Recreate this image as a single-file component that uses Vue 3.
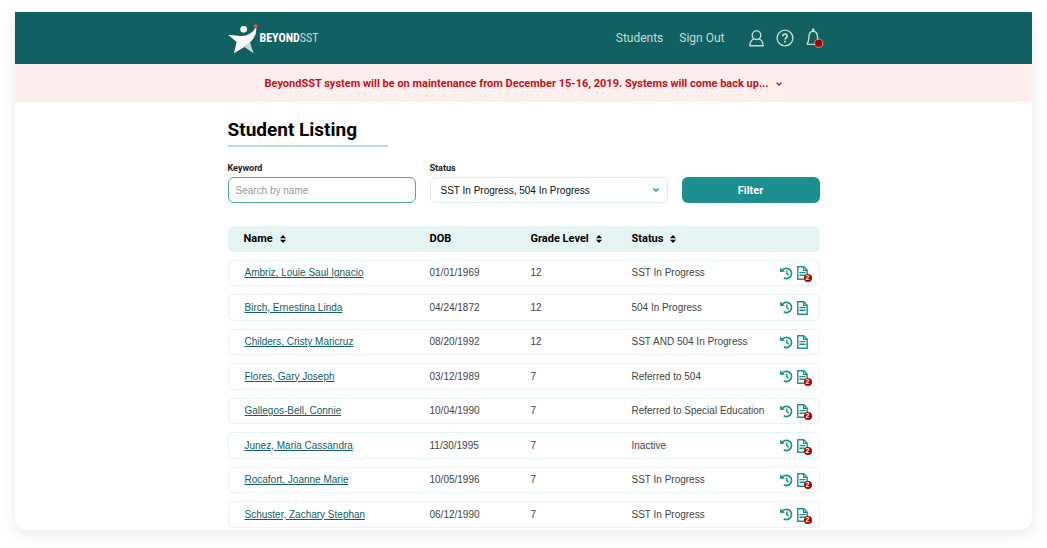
<script setup>
import { ref } from 'vue'

const keyword = ref('')
const status = ref('SST In Progress, 504 In Progress')
const statuses = ['SST In Progress, 504 In Progress', 'Referred to 504', 'Referred to Special Education', 'Inactive']

const columns = [
  { label: 'Name', key: 'name', sortable: true },
  { label: 'DOB', key: 'dob', sortable: false },
  { label: 'Grade Level', key: 'grade', sortable: true },
  { label: 'Status', key: 'status', sortable: true },
]

const students = [
  { name: 'Ambriz, Louie Saul Ignacio', dob: '01/01/1969', grade: 12, status: 'SST In Progress', notes: 2 },
  { name: 'Birch, Ernestina Linda', dob: '04/24/1872', grade: 12, status: '504 In Progress', notes: 0 },
  { name: 'Childers, Cristy Maricruz', dob: '08/20/1992', grade: 12, status: 'SST AND 504 In Progress', notes: 0 },
  { name: 'Flores, Gary Joseph', dob: '03/12/1989', grade: 7, status: 'Referred to 504', notes: 2 },
  { name: 'Gallegos-Bell, Connie', dob: '10/04/1990', grade: 7, status: 'Referred to Special Education', notes: 2 },
  { name: 'Junez, Maria Cassandra', dob: '11/30/1995', grade: 7, status: 'Inactive', notes: 2 },
  { name: 'Rocafort, Joanne Marie', dob: '10/05/1996', grade: 7, status: 'SST In Progress', notes: 2 },
  { name: 'Schuster, Zachary Stephan', dob: '06/12/1990', grade: 7, status: 'SST In Progress', notes: 2 },
]
</script>

<template>
  <div class="page">
    <div class="card">
      <header class="topbar">
        <div class="container topbar-inner">
          <a class="brand" href="#" aria-label="BeyondSST home">
            <svg class="brand-mark" viewBox="0 0 90 93" aria-hidden="true">
              <path d="M50 73L66 56L69 68L77 91Z" fill="#c3ddd4" />
              <path d="M0 35L31 38Q52 41 65 32Q78 25 82 15L85 15Q86 35 73 51Q65 60 50 71L18 91L26 57Z" fill="#fff" />
              <circle cx="47" cy="19" r="10" fill="#fff" />
              <path d="M83 1L86 5L91 7L87 10L87 15L82 13L77 14L78 9L75 6L81 6Z" fill="#f0561d" />
            </svg>
            <span class="brand-name">BEYOND<span class="brand-tail">SST</span></span>
          </a>
          <nav class="nav">
            <a href="#">Students</a>
            <a href="#">Sign Out</a>
            <div class="nav-icons">
              <button type="button" aria-label="Account">
                <svg width="15" height="17" viewBox="0 0 15 17" fill="none" stroke="#c3ddd4" stroke-width="1.4" stroke-linejoin="round">
                  <circle cx="7.5" cy="5.2" r="4.3" />
                  <path d="M5.2 8.9C2.4 9.8 .9 12 .8 15.8H14.2C14.1 12 12.6 9.8 9.8 8.9" />
                </svg>
              </button>
              <button type="button" aria-label="Help">
                <svg width="18" height="18" viewBox="0 0 18 18" fill="none" stroke="#c3ddd4">
                  <circle cx="9" cy="9" r="7.9" stroke-width="1.4" />
                  <path d="M6.8 7.3C6.8 4.4 11.3 4.5 11.3 7C11.3 8.7 9 8.8 9 10.6" stroke-width="1.7" />
                  <path d="M9 11.8V13.4" stroke-width="1.8" />
                </svg>
              </button>
              <button type="button" aria-label="Notifications">
                <svg width="18" height="20" viewBox="0 0 18 20">
                  <g fill="none" stroke="#c3ddd4" stroke-width="1.4" stroke-linejoin="round">
                    <path d="M6.6 3V1.2H7.8V3M.9 16.4C2.8 14 2.7 12 2.9 8.7C3.1 5 4.8 3.2 7.2 3.2C9.6 3.2 11.3 5 11.5 8.7C11.7 11 11.6 13 13.2 15M.9 16.4H10" />
                  </g>
                  <circle cx="12.7" cy="15.3" r="4.1" fill="#a80000" stroke="#e8d5d0" stroke-width=".6" />
                </svg>
              </button>
            </div>
          </nav>
        </div>
      </header>

      <div class="notice" role="status">
        <span>BeyondSST system will be on maintenance from December 15-16, 2019. Systems will come back up...</span>
        <button type="button" aria-label="Show full notice">
          <svg width="6" height="4" viewBox="0 0 6 4"><path d="M.6.6L3 3L5.4.6" fill="none" stroke="#c8101a" stroke-width="1.3" /></svg>
        </button>
      </div>

      <main class="container content">
        <h1>Student Listing</h1>

        <form class="filters" @submit.prevent>
          <div class="field">
            <label for="keyword">Keyword</label>
            <input id="keyword" v-model="keyword" type="text" placeholder="Search by name" />
          </div>
          <div class="field">
            <label for="status">Status</label>
            <div class="select-wrap">
              <select id="status" v-model="status">
                <option v-for="s in statuses" :key="s">{{ s }}</option>
              </select>
              <svg class="select-arrow" width="6" height="4" viewBox="0 0 6 4" aria-hidden="true"><path d="M.5.6L3 3L5.5.6" fill="none" stroke="#1c8f8f" stroke-width="1.4" /></svg>
            </div>
          </div>
          <button class="filter-btn" type="submit">Filter</button>
        </form>

        <table class="students">
          <colgroup>
            <col class="col-name" /><col class="col-dob" /><col class="col-grade" /><col /><col class="col-actions" />
          </colgroup>
          <thead>
            <tr>
              <th v-for="c in columns" :key="c.key" scope="col">
                <button v-if="c.sortable" class="sort" type="button">
                  {{ c.label }}
                  <svg width="6" height="8" viewBox="0 0 6 8" aria-hidden="true"><path d="M3 0L6 3.2H0ZM0 4.8H6L3 8Z" /></svg>
                </button>
                <template v-else>{{ c.label }}</template>
              </th>
              <td></td>
            </tr>
          </thead>
          <tbody>
            <tr v-for="s in students" :key="s.name">
              <td><a href="#">{{ s.name }}</a></td>
              <td>{{ s.dob }}</td>
              <td>{{ s.grade }}</td>
              <td>{{ s.status }}</td>
              <td>
                <div class="actions">
                  <button type="button" :aria-label="`History of ${s.name}`">
                    <svg width="13" height="13" viewBox="0 0 13 13" fill="none" stroke="#1c8f8f">
                      <path d="M2 4A5.1 5.1 0 1 1 3.8 10.8" stroke-width="1.7" />
                      <path d="M0 .4L.2 5L5 4.7Z" fill="#1c8f8f" stroke="none" />
                      <path d="M6.8 3.4V6.6L8.8 8.3" stroke-width="1.4" />
                    </svg>
                  </button>
                  <button class="notes" type="button" :aria-label="`Documents of ${s.name}`">
                    <svg width="11" height="14" viewBox="0 0 11 14" fill="none" stroke="#1c8f8f">
                      <path d="M.8.8H6.8L10.2 4.2V13.2H.8Z" stroke-width="1.4" />
                      <path d="M6.6 1V4.4H10" stroke-width="1.3" />
                      <path d="M2.4 6.6H8.6M2.4 9.2H8.6" stroke-width="1.4" />
                    </svg>
                    <span v-if="s.notes" class="badge">{{ s.notes }}</span>
                  </button>
                </div>
              </td>
            </tr>
          </tbody>
        </table>
      </main>
    </div>
  </div>
</template>

<style>
body {
  background: #fff;
}
</style>

<style scoped>
.page {
  padding: 12px 15px 18px;
  font-family: "Liberation Sans", Arial, sans-serif;
  font-size: 10px;
  line-height: 14px;
  color: #222;
}
.page * {
  box-sizing: border-box;
}
button {
  padding: 0;
  border: 0;
  background: none;
  font: inherit;
  color: inherit;
  cursor: pointer;
}
svg {
  display: block;
}
.card {
  background: #fff;
  border-radius: 0 0 12px 12px;
  box-shadow: 0 4px 14px rgba(0, 0, 0, 0.09);
  overflow: hidden;
}
.container {
  max-width: 592px;
  margin: 0 auto;
}
.topbar {
  background: #116062;
}
.topbar-inner {
  display: flex;
  align-items: center;
  justify-content: space-between;
  height: 52px;
}
.brand {
  display: flex;
  align-items: center;
  gap: 2px;
  text-decoration: none;
}
.brand-mark {
  width: 30px;
  height: 31px;
}
.brand-name {
  font-family: "Roboto Condensed", "Liberation Sans Narrow", Roboto, sans-serif;
  font-size: 12px;
  font-weight: 700;
  color: #fff;
}
.brand-tail {
  font-weight: 400;
  color: #c3ddd4;
}
.nav {
  display: flex;
  align-items: center;
  gap: 16px;
}
.nav a,
.notice,
h1,
.field label,
.filter-btn,
.students thead {
  font-family: Roboto, "Liberation Sans", sans-serif;
}
.nav a {
  font-size: 12px;
  line-height: 16px;
  color: #c3ddd4;
  text-decoration: none;
}
.nav-icons {
  display: flex;
  align-items: center;
  gap: 12px;
  padding-left: 8px;
  margin-right: -4px;
}
.notice {
  display: flex;
  align-items: center;
  justify-content: center;
  gap: 8px;
  min-height: 38px;
  padding-top: 2px;
  background: #feefee;
  color: #c8101a;
  font-size: 11px;
  font-weight: 700;
}
.content {
  padding: 16px 0 2px;
}
h1 {
  width: 160px;
  margin: 0 0 16px;
  padding-bottom: 4px;
  border-bottom: 2px solid #c3ddd4;
  font-size: 19px;
  line-height: 23px;
  font-weight: 700;
  color: #000;
  white-space: nowrap;
}
.filters {
  display: grid;
  grid-template-columns: 188fr 238fr 138fr;
  gap: 14px;
  align-items: end;
  margin-bottom: 15px;
}
.field label {
  display: block;
  margin-bottom: 3px;
  font-size: 9px;
  line-height: 11px;
  font-weight: 700;
}
input,
select {
  display: block;
  width: 100%;
  height: 26px;
  border: 1px solid #d8eeec;
  border-radius: 6px;
  background: #fff;
  font: inherit;
  color: #111;
}
input {
  padding: 1px 7px 0;
  border-color: #4fa9a9;
}
input::placeholder {
  color: #999;
  opacity: 1;
}
.select-wrap {
  position: relative;
}
select {
  padding: 1px 24px 0 10px;
  appearance: none;
}
.select-arrow {
  position: absolute;
  top: 11px;
  right: 9px;
  pointer-events: none;
}
.filter-btn {
  height: 26px;
  padding-top: 1px;
  border-radius: 6px;
  background: #1c8f8f;
  color: #fff;
  font-size: 11px;
  font-weight: 700;
}
.students {
  width: 100%;
  table-layout: fixed;
  border-collapse: separate;
  border-spacing: 0 8px;
  margin-bottom: -8px;
}
.col-name {
  width: 202px;
}
.col-dob,
.col-grade {
  width: 101px;
}
.col-actions {
  width: 40px;
}
th,
td {
  height: 26px;
  padding: 0;
  text-align: left;
  vertical-align: middle;
  white-space: nowrap;
}
thead th,
thead td {
  background: #e5f4f3;
  font-size: 11px;
  font-weight: 700;
  color: #000;
}
tr > :first-child {
  padding-left: 16px;
  border-radius: 6px 0 0 6px;
}
tr > :last-child {
  border-radius: 0 6px 6px 0;
}
tbody td {
  border: solid #e5f4f3;
  border-width: 1px 0;
  color: #444;
}
tbody td:first-child {
  border-left-width: 1px;
}
tbody td:last-child {
  border-right-width: 1px;
}
tbody tr:nth-child(even) td {
  height: 27px;
}
tbody a {
  color: #116062;
  text-underline-offset: 1px;
}
.sort {
  display: flex;
  align-items: center;
  gap: 7px;
}
.actions {
  display: flex;
  align-items: center;
  gap: 4px;
}
.notes {
  position: relative;
}
.badge {
  position: absolute;
  right: -4px;
  bottom: -2px;
  width: 8px;
  height: 8px;
  border-radius: 50%;
  background: #a80000;
  color: #fff;
  font-size: 7px;
  line-height: 8px;
  font-weight: 700;
  text-align: center;
}
</style>
